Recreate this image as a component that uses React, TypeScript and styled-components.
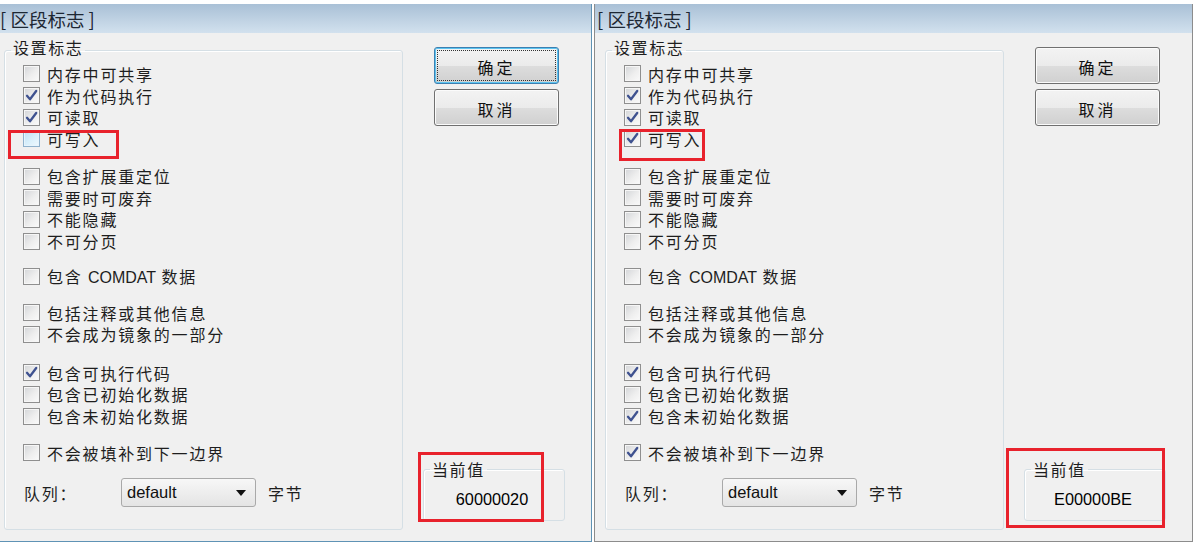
import React from 'react';
import styled, { createGlobalStyle, css } from 'styled-components';

const Global = createGlobalStyle`
  html, body { margin: 0; padding: 0; background: #ffffff; overflow: hidden; }
  body { font-family: "Noto Sans CJK SC", "Liberation Sans", sans-serif; color: #1e1e1e; }
  * { box-sizing: border-box; }
`;

const Stage = styled.div`
  width: 1200px;
  height: 547px;
  display: flex;
  align-items: flex-start;
  gap: 2px;
  padding-top: 4px;
  overflow: hidden;
`;

const Window = styled.div<{ $offset: number; $frame: string }>`
  position: relative;
  flex: none;
  width: 599px;
  height: 538px;
  margin-left: ${p => p.$offset}px;
  background: #f0f0f0;
  border: 1px solid ${p => p.$frame};
  border-top: none;
  display: flex;
  flex-direction: column;
`;

const TitleBar = styled.div<{ $indent: number }>`
  height: 29px;
  flex: none;
  display: flex;
  align-items: center;
  padding-left: ${p => p.$indent}px;
  background: linear-gradient(#a9c0d6, #d2e1ee);
  font-size: 18.5px;
  color: #1d2733;
  white-space: pre;
`;

const Body = styled.div`
  flex: 1;
  display: flex;
  padding: 4px 0 11px 10px;
`;

const Group = styled.fieldset`
  margin: 0;
  padding: 0 0 0 18px;
  width: 399px;
  border: 1px solid #d5dfe5;
  border-radius: 3px;
  box-shadow: inset 1px 1px 0 #ffffff;
  display: flex;
  flex-direction: column;
`;

const Legend = styled.legend`
  margin-left: -12px;
  padding: 0 2px 6px;
  line-height: 20px;
  font-size: 16px;
  letter-spacing: 1.6px;
`;

const Section = styled.div<{ $mt: number }>`
  display: flex;
  flex-direction: column;
  margin-top: ${p => p.$mt}px;
`;

const Row = styled.label`
  height: 21.7px;
  display: flex;
  align-items: center;
  gap: 7px;
  font-size: 16px;
  letter-spacing: 1.8px;
  white-space: pre;
`;

const Box = styled.span<{ $hot?: boolean }>`
  width: 17px;
  height: 17px;
  flex: none;
  display: flex;
  align-items: center;
  justify-content: center;
  border: 1px solid #8f8f8f;
  background: linear-gradient(135deg, #d3d5d8 0%, #eeeeee 55%, #fafafa 100%);
  box-shadow: inset 0 0 0 1px #f6f6f6;
  ${p => p.$hot && css`
    border-color: #8fb1cc;
    background: linear-gradient(135deg, #bfe0f5 0%, #daf0fb 55%, #eef8fe 100%);
    box-shadow: inset 0 0 0 1px #e6f4fc;
  `}
`;

const Latin = styled.span`
  font-family: "Liberation Sans", sans-serif;
  letter-spacing: 0;
`;

const QueueRow = styled.div`
  margin-top: 14px;
  height: 30px;
  display: flex;
  align-items: center;
  padding-left: 1px;
  font-size: 16px;
  letter-spacing: 1.8px;
`;

const QueueLabel = styled.span`
  width: 97px;
  flex: none;
`;

const Select = styled.div`
  width: 135px;
  height: 29px;
  flex: none;
  display: flex;
  align-items: center;
  justify-content: space-between;
  padding: 0 9px 0 5px;
  border: 1px solid #a9a9a9;
  border-radius: 3px;
  background: linear-gradient(#f7f7f7, #e4e4e4);
  font-family: "Liberation Sans", sans-serif;
  font-size: 16.5px;
  letter-spacing: 0;
  color: #111;
`;

const Unit = styled.span`
  margin-left: 12px;
`;

const Side = styled.div`
  width: 142px;
  margin-left: 20px;
  margin-top: 10px;
  display: flex;
  flex-direction: column;
`;

const Button = styled.div<{ $default?: boolean }>`
  position: relative;
  width: 125px;
  height: 37px;
  margin-left: 11px;
  margin-bottom: 5px;
  display: flex;
  align-items: center;
  justify-content: center;
  padding-top: 2px;
  border: 1px solid #707070;
  border-radius: 3px;
  background: linear-gradient(#f3f3f3 0%, #ebebeb 50%, #dddddd 51%, #d0d0d0 100%);
  box-shadow: inset 0 0 0 1px #fbfbfb;
  font-size: 16px;
  letter-spacing: 3px;
  color: #111;
  ${p => p.$default && css`
    border-color: #3c7fb1;
    box-shadow: inset 0 0 0 1px #5cc4f0;
    &::after {
      content: '';
      position: absolute;
      inset: 2px;
      border: 1px dotted #333;
    }
  `}
`;

const ValueBox = styled.fieldset`
  margin: auto 0 9px 0;
  padding: 10px 4px 11px 0;
  border: 1px solid #d5dfe5;
  border-radius: 3px;
  box-shadow: inset 1px 1px 0 #ffffff;
`;

const ValueLegend = styled.legend`
  margin-left: 6px;
  padding: 0 2px;
  line-height: 20px;
  font-size: 16px;
  letter-spacing: 1.6px;
`;

const Value = styled.div`
  line-height: 20px;
  text-align: center;
  font-family: "Liberation Sans", sans-serif;
  font-size: 16.3px;
  color: #000;
`;

const Mark = styled.div<{ $l: number; $t: number; $w: number; $h: number }>`
  position: absolute;
  left: ${p => p.$l}px;
  top: ${p => p.$t}px;
  width: ${p => p.$w}px;
  height: ${p => p.$h}px;
  border: 3px solid #e8222c;
  pointer-events: none;
`;

const Check = () => (
  <svg width="13" height="13" viewBox="0 0 13 13">
    <path d="M2 6.8 L5 10.3 L11.2 2" fill="none" stroke="#3f5290" strokeWidth="2.3" strokeLinecap="round" strokeLinejoin="round" />
  </svg>
);

const Arrow = () => (
  <svg width="10" height="6" viewBox="0 0 10 6">
    <path d="M0 0 H10 L5 6 Z" fill="#111" />
  </svg>
);

type Item = { text: React.ReactNode; key: string };

const sections: { mt: number; items: Item[] }[] = [
  { mt: 0, items: [
    { key: 'share', text: '内存中可共享' },
    { key: 'exec', text: '作为代码执行' },
    { key: 'read', text: '可读取' },
    { key: 'write', text: '可写入' },
  ] },
  { mt: 15.5, items: [
    { key: 'reloc', text: '包含扩展重定位' },
    { key: 'discard', text: '需要时可废弃' },
    { key: 'nocache', text: '不能隐藏' },
    { key: 'nopage', text: '不可分页' },
  ] },
  { mt: 13.2, items: [
    { key: 'comdat', text: <>包含 <Latin>COMDAT</Latin> 数据</> },
  ] },
  { mt: 15, items: [
    { key: 'info', text: '包括注释或其他信息' },
    { key: 'remove', text: '不会成为镜象的一部分' },
  ] },
  { mt: 16.6, items: [
    { key: 'code', text: '包含可执行代码' },
    { key: 'init', text: '包含已初始化数据' },
    { key: 'uninit', text: '包含未初始化数据' },
  ] },
  { mt: 15, items: [
    { key: 'pad', text: '不会被填补到下一边界' },
  ] },
];

type PanelProps = {
  offset: number;
  frame: string;
  indent: number;
  checked: string[];
  hot?: string;
  value: string;
  defaultFocus?: boolean;
  marks: { l: number; t: number; w: number; h: number }[];
};

const Panel: React.FC<PanelProps> = ({ offset, frame, indent, checked, hot, value, defaultFocus, marks }) => (
  <Window $offset={offset} $frame={frame}>
    <TitleBar $indent={indent}>[ 区段标志 ]</TitleBar>
    <Body>
      <Group>
        <Legend>设置标志</Legend>
        {sections.map((s, i) => (
          <Section key={i} $mt={s.mt}>
            {s.items.map(it => (
              <Row key={it.key}>
                <Box $hot={hot === it.key}>{checked.includes(it.key) && <Check />}</Box>
                <span>{it.text}</span>
              </Row>
            ))}
          </Section>
        ))}
        <QueueRow>
          <QueueLabel>队列：</QueueLabel>
          <Select>
            <span>default</span>
            <Arrow />
          </Select>
          <Unit>字节</Unit>
        </QueueRow>
      </Group>
      <Side>
        <Button $default={defaultFocus}>确定</Button>
        <Button>取消</Button>
        <ValueBox>
          <ValueLegend>当前值</ValueLegend>
          <Value>{value}</Value>
        </ValueBox>
      </Side>
    </Body>
    {marks.map((m, i) => (
      <Mark key={i} $l={m.l} $t={m.t} $w={m.w} $h={m.h} />
    ))}
  </Window>
);

export default function App() {
  return (
    <>
      <Global />
      <Stage>
        <Panel
          offset={-7}
          frame="#5f93b5"
          indent={6}
          checked={['exec', 'read', 'code']}
          hot="write"
          value="60000020"
          defaultFocus
          marks={[
            { l: 14, t: 126, w: 111, h: 29 },
            { l: 424, t: 448, w: 126, h: 70 },
          ]}
        />
        <Panel
          offset={0}
          frame="#8c8c8c"
          indent={2}
          checked={['exec', 'read', 'write', 'code', 'uninit', 'pad']}
          value="E00000BE"
          marks={[
            { l: 24, t: 125, w: 86, h: 32 },
            { l: 411, t: 444, w: 159, h: 80 },
          ]}
        />
      </Stage>
    </>
  );
}
